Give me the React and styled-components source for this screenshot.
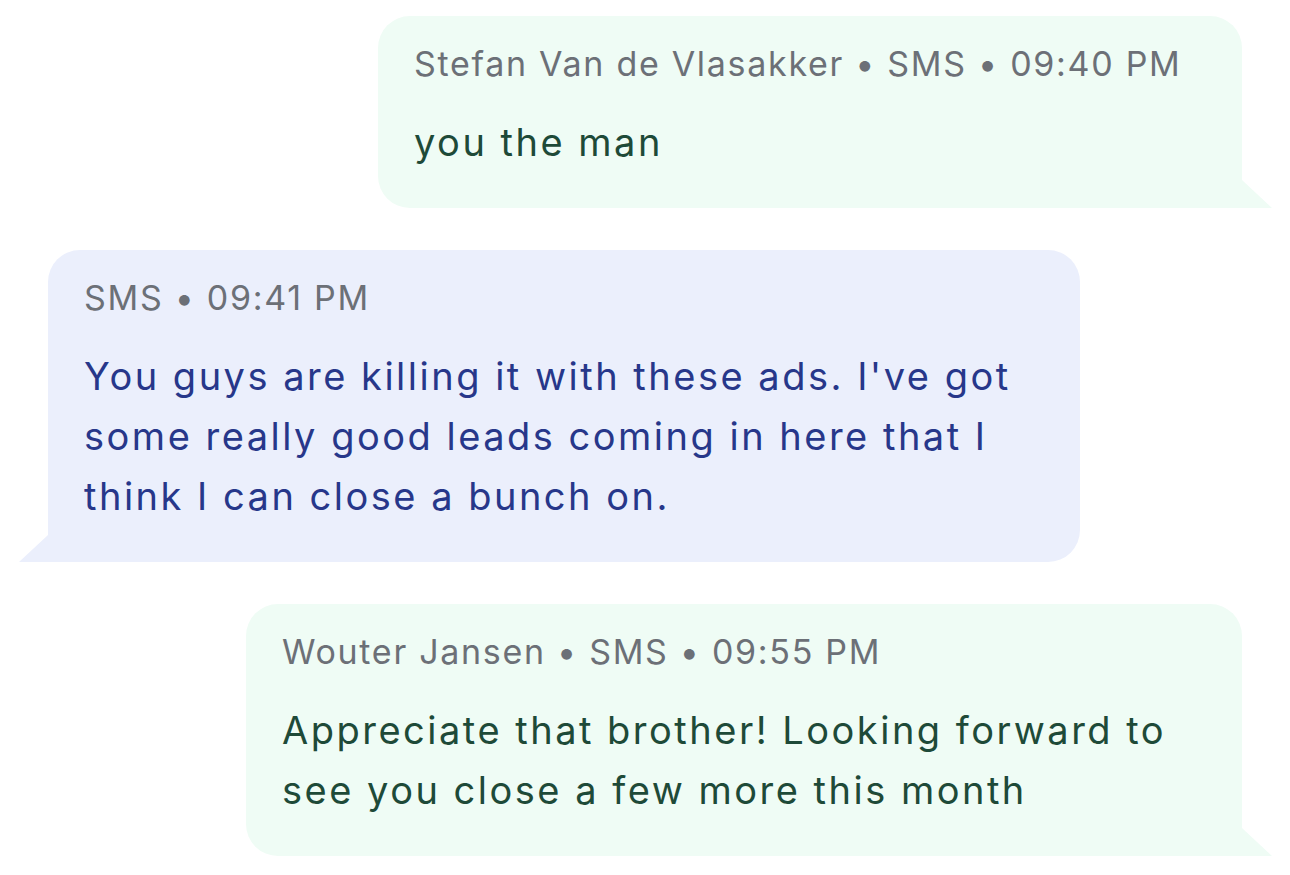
import React from "react";
import styled, { createGlobalStyle, css } from "styled-components";

const GlobalStyle = createGlobalStyle`
  html, body {
    margin: 0;
    padding: 0;
    background: #ffffff;
  }
  body {
    font-family: Inter, "Noto Sans", "Liberation Sans", sans-serif;
  }
`;

const messages = [
  {
    id: 1,
    side: "right",
    meta: "Stefan Van de Vlasakker • SMS • 09:40 PM",
    text: "you the man",
    width: 864,
  },
  {
    id: 2,
    side: "left",
    meta: "SMS • 09:41 PM",
    text: "You guys are killing it with these ads. I've got some really good leads coming in here that I think I can close a bunch on.",
    width: 1032,
  },
  {
    id: 3,
    side: "right",
    meta: "Wouter Jansen • SMS • 09:55 PM",
    text: "Appreciate that brother! Looking forward to see you close a few more this month",
    width: 996,
  },
];

const App = () => {
  return (
    <>
      <GlobalStyle />
      <Thread>
        {messages.map((m) => (
          <Bubble key={m.id} side={m.side} style={{ width: m.width }}>
            <Meta>{m.meta}</Meta>
            <Body side={m.side}>{m.text}</Body>
          </Bubble>
        ))}
      </Thread>
    </>
  );
};

export default App;

const Thread = styled.div`
  display: flex;
  flex-direction: column;
  gap: 42px;
  padding: 16px 48px;
`;

const Bubble = styled.div`
  position: relative;
  box-sizing: border-box;
  padding: 24px 36px 36px;
  border-radius: 32px;
  background-color: ${({ side }) => (side === "right" ? "#effcf5" : "#ebeffc")};
  align-self: ${({ side }) => (side === "right" ? "flex-end" : "flex-start")};

  ${({ side }) =>
    side === "right"
      ? css`
          border-bottom-right-radius: 0;
          &::after {
            content: "";
            position: absolute;
            right: -30px;
            bottom: 0;
            width: 30px;
            height: 28px;
            background: #effcf5;
            clip-path: polygon(0 0, 100% 100%, 0 100%);
          }
        `
      : css`
          border-bottom-left-radius: 0;
          &::after {
            content: "";
            position: absolute;
            left: -29px;
            bottom: 0;
            width: 29px;
            height: 27px;
            background: #ebeffc;
            clip-path: polygon(100% 0, 100% 100%, 0 100%);
          }
        `}
`;

const Meta = styled.div`
  font-size: 34px;
  line-height: 48px;
  letter-spacing: 1.7px;
  color: #6c7077;
  white-space: nowrap;
`;

const Body = styled.div`
  margin-top: 24px;
  font-size: 38px;
  line-height: 60px;
  letter-spacing: 2.5px;
  color: ${({ side }) => (side === "right" ? "#1e4a38" : "#27378a")};
`;
